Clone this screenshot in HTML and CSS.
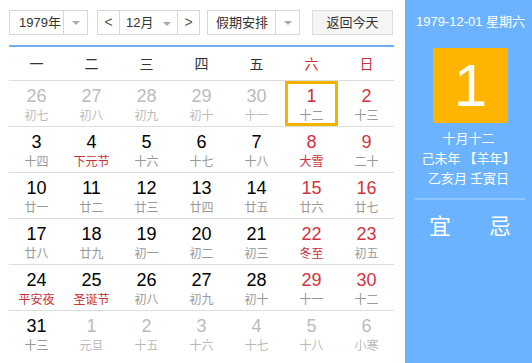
FILE: index.html
```html
<!DOCTYPE html>
<html lang="zh-CN">
<head>
    <meta charset="UTF-8">
    <title>万年历</title>
    <link rel="stylesheet" href="styles.css">
</head>
<body>
    <div class="calendar">
        <div class="main">
            <div class="toolbar">
                <div class="select year-select">
                    <span class="select-text">1979年</span>
                    <span class="select-arrow"><i class="caret"></i></span>
                </div>
                <div class="month-group">
                    <span class="nav-btn">&lt;</span>
                    <span class="month-text">12月 <i class="caret"></i></span>
                    <span class="nav-btn">&gt;</span>
                </div>
                <div class="select holiday-select">
                    <span class="select-text">假期安排</span>
                    <span class="select-arrow"><i class="caret"></i></span>
                </div>
                <div class="today-btn">返回今天</div>
            </div>

            <div class="week-head">
                <span>一</span><span>二</span><span>三</span><span>四</span><span>五</span>
                <span class="red">六</span><span class="red">日</span>
            </div>

            <div class="days">
                <div class="day other"><b>26</b><small>初七</small></div>
                <div class="day other"><b>27</b><small>初八</small></div>
                <div class="day other"><b>28</b><small>初九</small></div>
                <div class="day other"><b>29</b><small>初十</small></div>
                <div class="day other"><b>30</b><small>十一</small></div>
                <div class="day weekend today"><b>1</b><small>十二</small></div>
                <div class="day weekend"><b>2</b><small>十三</small></div>

                <div class="day"><b>3</b><small>十四</small></div>
                <div class="day"><b>4</b><small class="fest">下元节</small></div>
                <div class="day"><b>5</b><small>十六</small></div>
                <div class="day"><b>6</b><small>十七</small></div>
                <div class="day"><b>7</b><small>十八</small></div>
                <div class="day weekend"><b>8</b><small class="fest">大雪</small></div>
                <div class="day weekend"><b>9</b><small>二十</small></div>

                <div class="day"><b>10</b><small>廿一</small></div>
                <div class="day"><b>11</b><small>廿二</small></div>
                <div class="day"><b>12</b><small>廿三</small></div>
                <div class="day"><b>13</b><small>廿四</small></div>
                <div class="day"><b>14</b><small>廿五</small></div>
                <div class="day weekend"><b>15</b><small>廿六</small></div>
                <div class="day weekend"><b>16</b><small>廿七</small></div>

                <div class="day"><b>17</b><small>廿八</small></div>
                <div class="day"><b>18</b><small>廿九</small></div>
                <div class="day"><b>19</b><small>初一</small></div>
                <div class="day"><b>20</b><small>初二</small></div>
                <div class="day"><b>21</b><small>初三</small></div>
                <div class="day weekend"><b>22</b><small class="fest">冬至</small></div>
                <div class="day weekend"><b>23</b><small>初五</small></div>

                <div class="day"><b>24</b><small class="fest">平安夜</small></div>
                <div class="day"><b>25</b><small class="fest">圣诞节</small></div>
                <div class="day"><b>26</b><small>初八</small></div>
                <div class="day"><b>27</b><small>初九</small></div>
                <div class="day"><b>28</b><small>初十</small></div>
                <div class="day weekend"><b>29</b><small>十一</small></div>
                <div class="day weekend"><b>30</b><small>十二</small></div>

                <div class="day last"><b>31</b><small>十三</small></div>
                <div class="day other last"><b>1</b><small>元旦</small></div>
                <div class="day other last"><b>2</b><small>十五</small></div>
                <div class="day other last"><b>3</b><small>十六</small></div>
                <div class="day other last"><b>4</b><small>十七</small></div>
                <div class="day other last"><b>5</b><small>十八</small></div>
                <div class="day other last"><b>6</b><small>小寒</small></div>
            </div>
        </div>

        <div class="side">
            <div class="side-date">1979-12-01 星期六</div>
            <div class="big-day">1</div>
            <div class="lunar">
                <p>十月十二</p>
                <p>己未年 【羊年】</p>
                <p>乙亥月 壬寅日</p>
            </div>
            <div class="yiji">
                <span>宜</span>
                <span>忌</span>
            </div>
        </div>
    </div>
</body>
</html>
```

FILE: styles.css
```css
body {
    margin: 0;
    font-family: Arial, "Liberation Sans", "Noto Sans CJK SC", sans-serif;
    background-color: #fff;
}

.calendar {
    display: flex;
    width: 532px;
    height: 363px;
    overflow: hidden;
}

.main {
    width: 385px;
    padding: 10px 11px 0 9px;
}

/* toolbar */
.toolbar {
    display: flex;
    height: 25px;
    margin-bottom: 10px;
    font-size: 13px;
    color: #333;
}

.select {
    display: flex;
    box-sizing: border-box;
    height: 25px;
    border: 1px solid #d8d8d8;
    background-color: #fff;
}

.select-text {
    flex: 1;
    line-height: 23px;
    padding-left: 9px;
}

.select-arrow {
    width: 23px;
    border-left: 1px solid #d8d8d8;
    display: flex;
    justify-content: center;
    align-items: center;
}

.caret {
    display: inline-block;
    width: 0;
    height: 0;
    border-left: 4px solid transparent;
    border-right: 4px solid transparent;
    border-top: 4px solid #aaa;
    vertical-align: middle;
}

.year-select {
    width: 79px;
}

.month-group {
    display: flex;
    box-sizing: border-box;
    width: 103px;
    height: 25px;
    margin-left: 9px;
    border: 1px solid #d8d8d8;
}

.nav-btn {
    width: 21px;
    text-align: center;
    line-height: 22px;
    color: #555;
    font-size: 14px;
}

.month-text {
    flex: 1;
    border-left: 1px solid #d8d8d8;
    border-right: 1px solid #d8d8d8;
    line-height: 23px;
    text-align: center;
}

.month-text .caret {
    margin-left: 6px;
}

.holiday-select {
    width: 93px;
    margin-left: 7px;
}

.holiday-select .select-text {
    padding-left: 8px;
}

.today-btn {
    box-sizing: border-box;
    width: 81px;
    height: 25px;
    margin-left: 12px;
    border: 1px solid #ddd;
    background-color: #f5f5f5;
    line-height: 23px;
    text-align: center;
}

/* grid */
.week-head {
    display: grid;
    grid-template-columns: repeat(7, 1fr);
    height: 33px;
    border-top: 2px solid #6fb1ec;
    border-bottom: 1px solid #ddd;
    font-family: "Noto Sans CJK SC", sans-serif;
    font-size: 14px;
    color: #333;
    text-align: center;
    line-height: 32px;
}

.red {
    color: #c9303a;
}

.days {
    display: grid;
    grid-template-columns: repeat(7, 1fr);
}

.day {
    box-sizing: border-box;
    height: 46px;
    border-bottom: 1px solid #ddd;
    text-align: center;
    padding-top: 5px;
}

.day.last {
    border-bottom: none;
}

.day b {
    display: block;
    font-weight: normal;
    font-size: 18px;
    line-height: 21px;
    color: #000;
}

.day small {
    display: block;
    font-family: "Noto Sans CJK SC", sans-serif;
    font-size: 12px;
    line-height: 16px;
    color: #999;
}

.day.weekend b {
    color: #d3323e;
}

.day small.fest {
    color: #c9303a;
}

.day.other b {
    color: #bbb;
}

.day.other small {
    color: #bbb;
}

.day.today {
    margin: 0 1px;
    box-shadow: inset 0 0 0 3px #f5b300;
}

.day.today b {
    color: #c9303a;
}

/* side panel */
.side {
    flex: 1;
    background-color: #6cb3ff;
    color: #fff;
    text-align: center;
    font-family: Arial, "Liberation Sans", "Noto Sans CJK SC", sans-serif;
}

.side-date {
    margin-top: 14px;
    font-size: 13px;
    line-height: 16px;
    padding-left: 4px;
}

.big-day {
    width: 75px;
    height: 75px;
    margin: 18px auto 0;
    background-color: #ffb400;
    border-radius: 0 0 3px 3px;
    font-size: 60px;
    line-height: 75px;
    position: relative;
    left: 2px;
}

.lunar {
    margin-top: 5px;
    font-family: "Noto Sans CJK SC", sans-serif;
    font-size: 13px;
}

.lunar p {
    margin: 0;
    line-height: 20px;
}

.yiji {
    display: flex;
    justify-content: space-between;
    margin: 10px 7px 0 10px;
    padding: 8px 14px 0;
    border-top: 2px solid #8ec5ff;
    font-family: "Noto Sans CJK SC", sans-serif;
    font-size: 22px;
    line-height: 32px;
}
```
